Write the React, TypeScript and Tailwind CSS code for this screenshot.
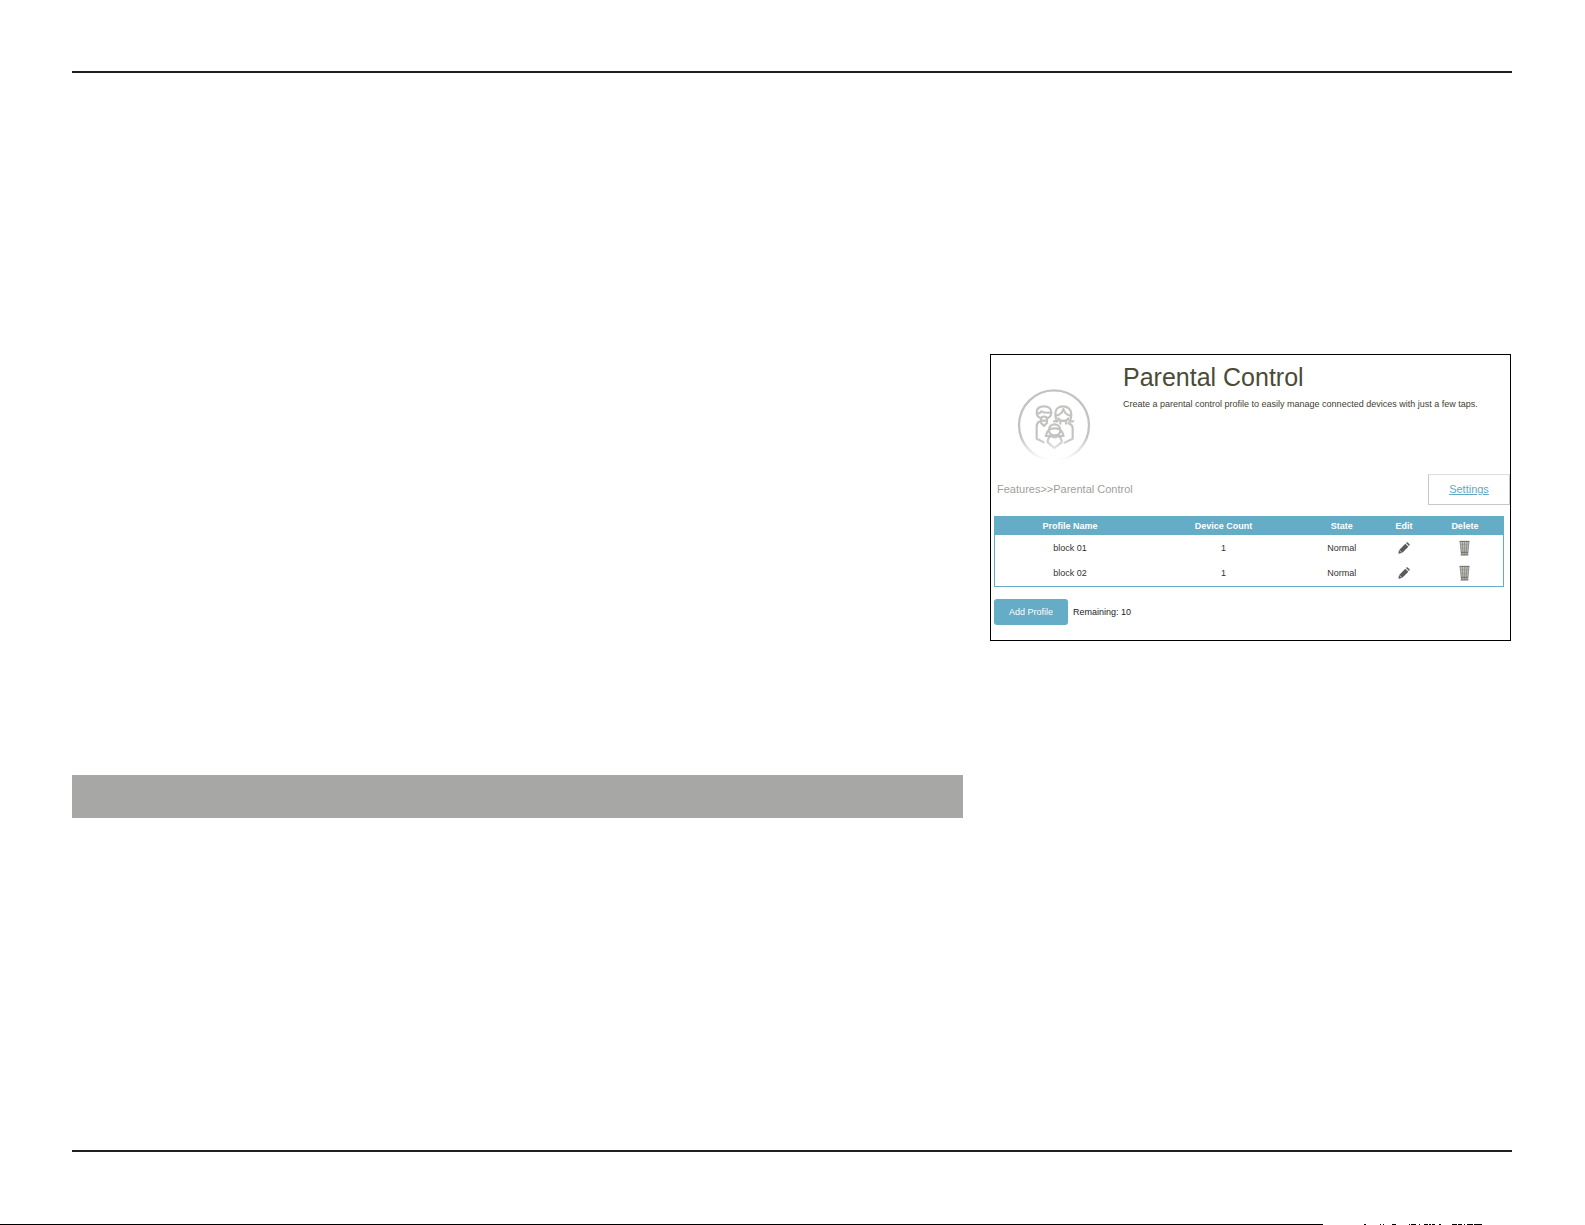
const profiles = [
  { name: "block 01", count: 1, state: "Normal" },
  { name: "block 02", count: 1, state: "Normal" },
];

function FamilyIcon() {
  return (
    <svg viewBox="0 0 270 270" className="size-[90px]" fill="none" stroke="#c3c3c1" strokeWidth="6.5" strokeLinecap="round" strokeLinejoin="round" aria-hidden="true">
      <defs>
        <linearGradient id="fade" gradientUnits="userSpaceOnUse" x1="0" y1="170" x2="0" y2="240">
          <stop offset="0" stopColor="#fff" stopOpacity="0" />
          <stop offset="1" stopColor="#fff" stopOpacity="1" />
        </linearGradient>
      </defs>
      <circle cx="132" cy="136" r="105" strokeWidth="7" />
      <path d="M93 115C84 112 80 106 80 97C80 85 89 79 102 79S124 86 124 97C124 106 120 112 112 115" />
      <path d="M81 101C87 101 92 98 94 94C102 99 111 99 123 98" />
      <path d="M93 128V117C93 111 97 110 102 110S111 111 111 117V128L102 138L93 128ZM97 122H107" />
      <path d="M132 124H143C138 119 136 112 136 101C136 87 146 79 159 79S184 88 184 101C184 112 182 119 178 124H190" />
      <path d="M138 107C149 105 157 99 160 87C163 99 171 105 182 107" />
      <path d="M145 115C149 125 171 125 175 115M151 124V131M168 124V131" />
      <path d="M90 124C83 127 80 132 80 139V176L101 187M175 130C184 132 188 138 188 146V176L164 188" />
      <path d="M117 150C117 139 124 133 133 133S151 139 151 150C151 160 144 166 134 166S117 160 117 150ZM118 148Q134 142 150 148" />
      <path d="M117 151C110 153 111 160 107 168H121M151 151C158 153 157 160 161 168H147" />
      <path d="M124 168C115 171 113 178 113 187L133 204L155 187C155 178 152 171 144 168Q134 176 124 168Z" />
      <rect width="270" height="270" fill="url(#fade)" stroke="none" />
    </svg>
  );
}

function PencilIcon() {
  return (
    <svg viewBox="0 0 36 36" className="size-3" fill="#5a5a5a" aria-hidden="true">
      <path d="M1 35L3 24L12 33ZM4 23L22 5L31 14L13 32ZM24 3L26 1Q28 0 30 2L34 6Q36 8 35 10L33 12Z" />
    </svg>
  );
}

function TrashIcon() {
  return (
    <svg viewBox="0 0 33 48" className="h-4 w-[11px]" aria-hidden="true">
      <path d="M2 3H31L27 45H6Z" fill="#c4c4be" />
      <path d="M2 4H31M5 45H28M6 37H27" stroke="#6e6e68" strokeWidth="3" />
      <path d="M3 4L8 45M10 4L12 45M17 4V45M24 4L21 45M30 4L26 45" stroke="#74746e" strokeWidth="2" fill="none" />
      <path d="M4 14H29M5 25H28" stroke="#95958f" strokeWidth="2" />
    </svg>
  );
}

function Panel() {
  return (
    <section className="border border-black bg-white pb-[15px]">
      <div className="flex pb-1">
        <div className="w-[132px] shrink-0 pt-[25px] pl-[19px]">
          <FamilyIcon />
        </div>
        <div className="min-w-0 pt-[7px]">
          <h1 className="text-[25px] leading-[30px] text-[#4c4b35]">Parental Control</h1>
          <p className="mt-[6px] text-[9px] leading-3 text-[#3f3e33]">
            Create a parental control profile to easily manage connected devices with just a few taps.
          </p>
        </div>
      </div>
      <div className="flex items-center justify-between pl-[6px] text-[11px]">
        <nav aria-label="Breadcrumb" className="text-[#a09f9b]">Features&gt;&gt;Parental Control</nav>
        <a href="#settings" className="flex h-[31px] w-[82px] items-center justify-center border border-[#c8c8c8] border-t-[#dedede] text-[#5da9c6] underline">
          Settings
        </a>
      </div>
      <div className="mt-[11px] mr-[6px] ml-[3px]">
        <table className="w-full table-fixed border-separate border-spacing-0 border border-[#65acc7] pb-px text-center text-[9px] leading-3 text-[#33332f]">
          <colgroup>
            <col className="w-[29.5%]" />
            <col className="w-[31%]" />
            <col className="w-[15.5%]" />
            <col className="w-[9%]" />
            <col className="w-[15%]" />
          </colgroup>
          <thead>
            <tr className="h-[18px] bg-[#65acc7] text-white">
              <th className="p-0">Profile Name</th>
              <th className="p-0">Device Count</th>
              <th className="p-0">State</th>
              <th className="p-0">Edit</th>
              <th className="p-0">Delete</th>
            </tr>
          </thead>
          <tbody>
            {profiles.map((p) => (
              <tr key={p.name} className="h-[25px]">
                <td className="p-0">{p.name}</td>
                <td className="p-0">{p.count}</td>
                <td className="p-0">{p.state}</td>
                <td className="p-0">
                  <button type="button" aria-label={`Edit ${p.name}`} className="mx-auto block">
                    <PencilIcon />
                  </button>
                </td>
                <td className="p-0">
                  <button type="button" aria-label={`Delete ${p.name}`} className="mx-auto block">
                    <TrashIcon />
                  </button>
                </td>
              </tr>
            ))}
          </tbody>
        </table>
        <div className="mt-3 flex items-center text-[9px] leading-3">
          <button type="button" className="h-[26px] w-[74px] rounded-[3px] bg-[#65acc7] text-white">Add Profile</button>
          <span className="ml-[5px] text-[#22221f]">Remaining: 10</span>
        </div>
      </div>
    </section>
  );
}

function PageEdge() {
  return (
    <div className="flex h-px">
      <div className="grow bg-black" />
      <svg viewBox="0 0 262 1" className="h-px w-[262px] shrink-0" shapeRendering="crispEdges" aria-hidden="true">
        <path
          d="M41 0h2v1h-2zM57 0h1v1h-1zM60 0h1v1h-1zM69 0h4v1h-4zM86 0h1v1h-1zM88 0h5v1h-5zM96 0h1v1h-1zM101 0h4v1h-4zM106 0h2v1h-2zM109 0h3v1h-3zM116 0h2v1h-2zM129 0h5v1h-5zM135 0h4v1h-4zM141 0h1v1h-1zM144 0h6v1h-6zM151 0h8v1h-8z"
          fill="#000"
        />
      </svg>
    </div>
  );
}

export default function App() {
  return (
    <div className="flex min-h-screen flex-col bg-white font-['Liberation_Sans',Arial,sans-serif]">
      <div className="flex grow flex-col pt-[71px] pr-[73px] pb-[72px] pl-[72px]">
        <hr className="h-0.5 border-0 bg-[#231f20]" />
        <main className="grid grow grid-cols-[891fr_521fr] items-start gap-[27px] pr-px">
          <div className="mt-[702px] h-[43px] bg-[#a7a7a5]" />
          <div className="mt-[281px]">
            <Panel />
          </div>
        </main>
        <hr className="h-0.5 border-0 bg-[#231f20]" />
      </div>
      <PageEdge />
    </div>
  );
}
